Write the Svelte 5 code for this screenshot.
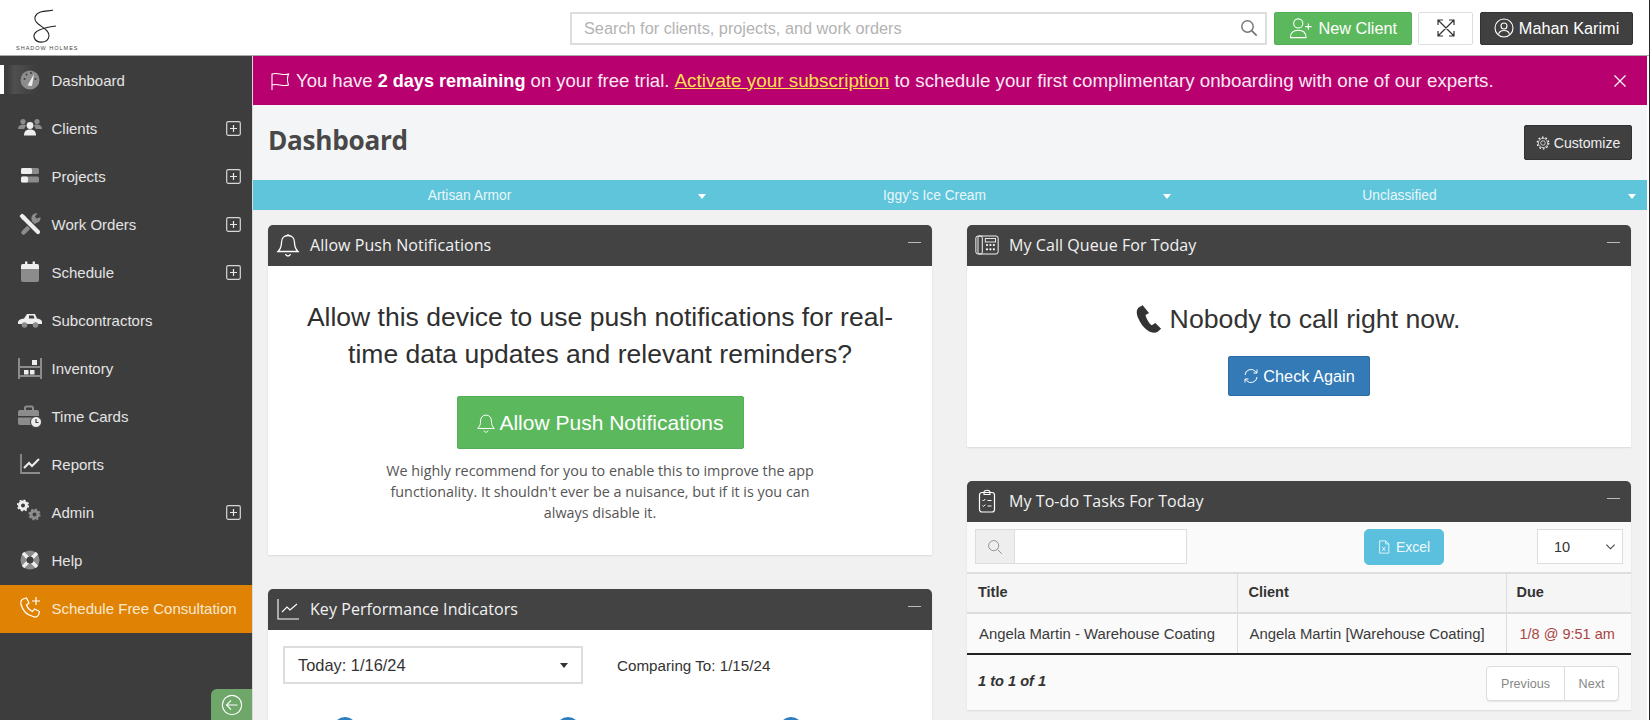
<script>
  const nav = [
    { label: 'Dashboard', icon: 'gauge', active: true },
    { label: 'Clients', icon: 'users', plus: true },
    { label: 'Projects', icon: 'projects', plus: true },
    { label: 'Work Orders', icon: 'tools', plus: true },
    { label: 'Schedule', icon: 'calendar', plus: true },
    { label: 'Subcontractors', icon: 'truck' },
    { label: 'Inventory', icon: 'inventory' },
    { label: 'Time Cards', icon: 'briefcase' },
    { label: 'Reports', icon: 'chart' },
    { label: 'Admin', icon: 'gears', plus: true },
    { label: 'Help', icon: 'help' }
  ];
</script>

{#snippet navIcon(name)}
  <svg class="nav-svg" viewBox="0 0 26 26" aria-hidden="true">
    {#if name === 'gauge'}
      <circle cx="13" cy="13" r="9.500" fill="#8c8c8c" />
      <circle cx="7.500" cy="12" r="1" fill="#3d3d3d" /><circle cx="9.500" cy="7.500" r="1" fill="#3d3d3d" /><circle cx="14" cy="6" r="1" fill="#3d3d3d" /><circle cx="18.500" cy="12" r="1" fill="#3d3d3d" />
      <path d="M10.500 18.500 L17 7 L15 19 Z" fill="#eee" />
    {:else if name === 'users'}
      <circle cx="6" cy="6.500" r="2.600" fill="#8c8c8c" /><circle cx="20" cy="6.500" r="2.600" fill="#8c8c8c" />
      <path d="M1 14c0-3 2-4.500 5-4.500s3 1 3 1l-2 3.500zM25 14c0-3-2-4.500-5-4.500s-3 1-3 1l2 3.500z" fill="#8c8c8c" />
      <circle cx="13" cy="10.500" r="3.400" fill="#eee" />
      <path d="M7 20.500c0-4.500 2.500-6 6-6s6 1.500 6 6z" fill="#eee" />
    {:else if name === 'projects'}
      <rect x="4" y="5" width="18" height="6" rx="1.500" fill="#8c8c8c" /><rect x="4" y="5" width="11" height="6" rx="1.500" fill="#eee" />
      <rect x="4" y="13.500" width="18" height="6" rx="1.500" fill="#8c8c8c" /><rect x="4" y="13.500" width="7" height="6" rx="1.500" fill="#eee" />
    {:else if name === 'tools'}
      <path d="M6.500 21.500L18 10" stroke="#8c8c8c" stroke-width="4.500" stroke-linecap="round" />
      <path d="M23.500 6a5 5 0 0 1-7 5.500L14.500 9a5 5 0 0 1 6-6.500L18 5.500l1.500 2 2-.5z" fill="#8c8c8c" />
      <path d="M6 6L21 21" stroke="#3d3d3d" stroke-width="6.500" />
      <path d="M5.500 5.500L21 21" stroke="#eee" stroke-width="4.200" stroke-linecap="round" />
      <path d="M2.500 5L5 2.500 9 6 6 9z" fill="#eee" />
    {:else if name === 'calendar'}
      <rect x="4" y="5" width="18" height="18" rx="2" fill="#8c8c8c" />
      <path d="M4 7a2 2 0 0 1 2-2h14a2 2 0 0 1 2 2v3H4z" fill="#eee" />
      <rect x="8" y="2.500" width="2.400" height="4" fill="#eee" /><rect x="15.600" y="2.500" width="2.400" height="4" fill="#eee" />
    {:else if name === 'truck'}
      <path d="M1 15c1-3 4-3 6-3.500l3-4.500h8l2 4.500c3 .5 5 1.500 5 3.500v2H1z" fill="#eee" />
      <path d="M12 8.500h4.500l1 3H12z" fill="#3d3d3d" />
      <circle cx="7.500" cy="18" r="2.800" fill="#8c8c8c" /><circle cx="18.500" cy="18" r="2.800" fill="#8c8c8c" />
    {:else if name === 'inventory'}
      <path d="M2 3v21M24 3v21" stroke="#8c8c8c" stroke-width="2" />
      <rect x="2" y="11" width="22" height="2" fill="#8c8c8c" /><rect x="2" y="20" width="22" height="2" fill="#8c8c8c" />
      <rect x="15" y="5" width="5" height="5" fill="#eee" /><rect x="7" y="15" width="4.500" height="4.500" fill="#eee" /><rect x="13" y="15" width="4.500" height="4.500" fill="#eee" />
    {:else if name === 'briefcase'}
      <path d="M8 7V5a1.500 1.500 0 0 1 1.500-1.500h5A1.500 1.500 0 0 1 16 5v2" fill="none" stroke="#8c8c8c" stroke-width="2" />
      <rect x="1" y="7" width="21" height="15" rx="2" fill="#8c8c8c" />
      <rect x="1" y="13" width="21" height="1.500" fill="#3d3d3d" />
      <circle cx="19" cy="19" r="5.500" fill="#eee" stroke="#3d3d3d" />
      <path d="M19 16v3.500h2.500" stroke="#3d3d3d" stroke-width="1.200" fill="none" />
    {:else if name === 'chart'}
      <path d="M4 3v19h19" fill="none" stroke="#8c8c8c" stroke-width="1.800" />
      <path d="M7 17l5-5 3 3 7-7" fill="none" stroke="#eee" stroke-width="2" />
    {:else if name === 'gears'}
      <circle cx="6" cy="6.500" r="3.500" fill="none" stroke="#eee" stroke-width="3" />
      <circle cx="6" cy="6.500" r="5.300" fill="none" stroke="#eee" stroke-width="1.600" stroke-dasharray="2 2.160" />
      <circle cx="17.500" cy="15.500" r="3.500" fill="none" stroke="#8c8c8c" stroke-width="3" />
      <circle cx="17.500" cy="15.500" r="5.300" fill="none" stroke="#8c8c8c" stroke-width="1.600" stroke-dasharray="2 2.160" />
    {:else if name === 'help'}
      <circle cx="13" cy="13" r="9.500" fill="#8c8c8c" />
      <path d="M6 6l5 5M20 6l-5 5M6 20l5-5M20 20l-5-5" stroke="#eee" stroke-width="3.500" />
      <circle cx="13" cy="13" r="3.500" fill="#3d3d3d" />
    {/if}
  </svg>
{/snippet}

<div class="app">
  <header class="topbar">
    <div class="logo">
      <svg class="logo-mark" viewBox="0 0 40 36" aria-hidden="true">
        <path d="M27 1C24 3 12 0 9 8C7 16 24 19 23 27C22 35 10 35 8 28C7 22 16 19 30 17" fill="none" stroke="#222" stroke-width="1.100" />
      </svg>
      <span>SHADOW HOLMES</span>
    </div>
    <div class="search">
      <span class="placeholder">Search for clients, projects, and work orders</span>
      <svg class="search-ico" viewBox="0 0 18 18"><circle cx="7.500" cy="7.500" r="5.700" fill="none" stroke="#777" stroke-width="1.500" /><path d="M11.700 11.700l5 5" stroke="#777" stroke-width="1.800" /></svg>
    </div>
    <button class="btn green">
      <svg viewBox="0 0 26 24" class="ico22"><circle cx="10" cy="7" r="5" fill="none" stroke="#fff" stroke-width="1.200" /><path d="M1.500 22.500c0-6 3-8 8.500-8s8.500 2 8.500 8z" fill="none" stroke="#fff" stroke-width="1.200" /><path d="M21 7v7M17.500 10.500h7" stroke="#fff" stroke-width="1.200" /></svg>
      New Client
    </button>
    <button class="btn expand" aria-label="Expand">
      <svg viewBox="0 0 20 20" class="ico20"><path d="M2 2l16 16M18 2L2 18M2 7V2h5M13 2h5v5M2 13v5h5M18 13v5h-5" fill="none" stroke="#333" stroke-width="1.200" /></svg>
    </button>
    <button class="btn dark user">
      <svg viewBox="0 0 20 20" class="ico20"><circle cx="10" cy="10" r="9" fill="none" stroke="#fff" stroke-width="1.100" /><circle cx="10" cy="8" r="3" fill="none" stroke="#fff" stroke-width="1.100" /><path d="M4.500 16.500c.5-3 2.500-4 5.500-4s5 1 5.500 4" fill="none" stroke="#fff" stroke-width="1.100" /></svg>
      Mahan Karimi
    </button>
  </header>

  <div class="shell">
    <aside class="sidebar">
      <nav>
        {#each nav as item}
          <div class="nav-item" class:active={item.active}>
            <span class="nav-icon">{@render navIcon(item.icon)}</span>
            <span class="nav-label">{item.label}</span>
            {#if item.plus}
              <svg class="plus" viewBox="0 0 15 15"><rect x=".7" y=".7" width="13.600" height="13.600" rx="1.500" fill="none" stroke="#d8d8d8" stroke-width="1.200" /><path d="M7.500 4v7M4 7.500h7" stroke="#e8e8e8" stroke-width="1.200" /></svg>
            {/if}
          </div>
        {/each}
        <div class="nav-item consult">
          <span class="nav-icon">
            <svg class="nav-svg" viewBox="0 0 26 26"><path d="M6 4l3.500-1 2.500 5-2.500 2c1 3 3 5 6 6.500l2-2.500 5 2.500-1 3.500c-1 2-3 2.500-5.500 1.500C10 20 5.500 15 4 9.500 3.500 7 4 5 6 4z" fill="none" stroke="#fff" stroke-width="1.200" /><path d="M19 2v8M15 6h8" stroke="#fff" stroke-width="1.200" /></svg>
          </span>
          <span class="nav-label">Schedule Free Consultation</span>
        </div>
      </nav>
      <button class="collapse" aria-label="Collapse">
        <svg viewBox="0 0 24 24" class="ico22"><circle cx="12" cy="12" r="10.500" fill="none" stroke="#fff" stroke-width="1.200" /><path d="M18 12H6.500M11 7l-5 5 5 5" fill="none" stroke="#fff" stroke-width="1.200" /></svg>
      </button>
    </aside>

    <main class="main">
      <div class="banner">
        <svg viewBox="0 0 20 20" class="flag"><path d="M2 19V3c5-2 11 2 16.500 0-1.500 4-1.500 7 0 11-5.500 2-11.500-2-16.500 0" fill="none" stroke="#fff" stroke-width="1.100" /></svg>
        <p>You have <b>2 days remaining</b> on your free trial. <a href="#top">Activate your subscription</a> <span class="rest">to schedule your first complimentary onboarding with one of our experts.</span></p>
        <svg viewBox="0 0 14 14" class="close"><path d="M1.500 1.500l11 11M12.500 1.500l-11 11" stroke="#fff" stroke-width="1.200" /></svg>
      </div>

      <div class="page-head">
        <h1>Dashboard</h1>
        <button class="btn dark customize">
          <svg viewBox="0 0 16 16" class="ico14"><circle cx="8" cy="8" r="2.600" fill="none" stroke="#fff" stroke-width=".8" /><circle cx="8" cy="8" r="5.300" fill="none" stroke="#fff" stroke-width=".8" /><circle cx="8" cy="8" r="6.600" fill="none" stroke="#fff" stroke-width="1.400" stroke-dasharray="2 2.150" /></svg>
          Customize
        </button>
      </div>

      <div class="filters">
        {#each ['Artisan Armor', "Iggy's Ice Cream", 'Unclassified'] as f}
          <div class="filter"><span>{f}</span><i class="caret"></i></div>
        {/each}
      </div>

      <div class="columns">
        <div class="col">
          <section class="panel push">
            <div class="panel-head">
              <svg viewBox="0 0 24 24" class="ph-ico"><path d="M12 2.500c-4 0-6.500 3-6.500 7 0 5-1.500 7-3.500 9h20c-2-2-3.500-4-3.500-9 0-4-2.500-7-6.500-7zM12 1v1.500M9.500 21c.5 1.500 1.300 2 2.500 2s2-.5 2.500-2" fill="none" stroke="#fff" stroke-width="1.300" /></svg>
              <h2>Allow Push Notifications</h2>
              <span class="minus"></span>
            </div>
            <div class="push-body">
              <p class="lead">Allow this device to use push notifications for real-time data updates and relevant reminders?</p>
              <button class="btn green large">
                <svg viewBox="0 0 24 24" class="ico20"><path d="M12 2.500c-4 0-6.500 3-6.500 7 0 5-1.500 7-3.500 9h20c-2-2-3.500-4-3.500-9 0-4-2.500-7-6.500-7zM9.500 21c.5 1.500 1.300 2 2.500 2s2-.5 2.500-2" fill="none" stroke="#fff" stroke-width="1.200" /></svg>
                Allow Push Notifications
              </button>
              <p class="note">We highly recommend for you to enable this to improve the app functionality. It shouldn't ever be a nuisance, but if it is you can always disable it.</p>
            </div>
          </section>

          <section class="panel">
            <div class="panel-head">
              <svg viewBox="0 0 24 24" class="ph-ico"><path d="M2 2v20h21" fill="none" stroke="#fff" stroke-width="1.100" /><path d="M6 15l5-5 3 3 7-6" fill="none" stroke="#fff" stroke-width="1.100" /></svg>
              <h2>Key Performance Indicators</h2>
              <span class="minus"></span>
            </div>
            <div class="kpi-body">
              <div class="kpi-controls">
                <div class="kpi-select"><span>Today: 1/16/24</span><i class="caret dark-caret"></i></div>
                <span class="comparing">Comparing To: 1/15/24</span>
              </div>
              <div class="kpi-dots"><i></i><i></i><i></i></div>
            </div>
          </section>
        </div>

        <div class="col">
          <section class="panel queue">
            <div class="panel-head">
              <svg viewBox="0 0 28 24" class="ph-ico wide"><rect x="1" y="1.500" width="26" height="21" rx="2.500" fill="none" stroke="#fff" stroke-width="1.100" /><rect x="3.500" y="1.500" width="5" height="21" rx="2" fill="none" stroke="#fff" stroke-width="1.100" /><rect x="12" y="4.500" width="12" height="4" fill="none" stroke="#fff" /><g fill="#fff"><circle cx="14" cy="12" r="1.300" /><circle cx="18" cy="12" r="1.300" /><circle cx="22" cy="12" r="1.300" /><circle cx="14" cy="17" r="1.300" /><circle cx="18" cy="17" r="1.300" /><circle cx="22" cy="17" r="1.300" /></g></svg>
              <h2>My Call Queue For Today</h2>
              <span class="minus"></span>
            </div>
            <div class="queue-body">
              <p class="nobody">
                <svg viewBox="0 0 24 26" class="phone"><path d="M6.500 1L3 3C1 5 1 8 2.500 12c2 5 5 9 9 11.500 3 1.800 6 2 8 .5l3-2.500-5-5-3 2c-2-1-5-6-5.500-9l3-1.800z" fill="#333" /></svg>
                Nobody to call right now.
              </p>
              <button class="btn blue">
                <svg viewBox="0 0 16 16" class="ico16"><path d="M2 7a6 6 0 0 1 10.500-3.500L14 5M14 9a6 6 0 0 1-10.500 3.500L2 11M14 1.500V5h-3.500M2 14.500V11h3.500" fill="none" stroke="#fff" stroke-width="1" /></svg>
                Check Again
              </button>
            </div>
          </section>

          <section class="panel">
            <div class="panel-head">
              <svg viewBox="0 0 24 24" class="ph-ico"><rect x="4.500" y="3.500" width="15" height="19.500" rx="2.500" fill="none" stroke="#fff" stroke-width="1.200" /><path d="M9 3.500c0-3 6-3 6 0v2H9z" fill="none" stroke="#fff" stroke-width="1.100" /><path d="M7.500 11l1 1 1.800-2M7.500 16.500l1 1 1.800-2M12.500 11.500h4M12.500 17h4" fill="none" stroke="#fff" /></svg>
              <h2>My To-do Tasks For Today</h2>
              <span class="minus"></span>
            </div>
            <div class="toolbar">
              <div class="tsearch">
                <span class="addon"><svg viewBox="0 0 18 18" class="ico16"><circle cx="7.500" cy="7.500" r="5.700" fill="none" stroke="#888" /><path d="M11.700 11.700l5 5" stroke="#888" /></svg></span>
                <span class="tinput"></span>
              </div>
              <button class="btn excel">
                <svg viewBox="0 0 14 16" class="ico14"><path d="M2 1h7l3.500 3.500V15H2zM9 1v3.500h3.500M5 8l3.500 4.500M8.500 8L5 12.500" fill="none" stroke="#fff" stroke-width=".9" /></svg>
                Excel
              </button>
              <div class="length"><span>10</span><svg viewBox="0 0 12 8" class="chev"><path d="M1.500 1.500L6 6l4.500-4.500" fill="none" stroke="#333" stroke-width="1.100" /></svg></div>
            </div>
            <table>
              <thead>
                <tr><th class="c1">Title</th><th class="c2">Client</th><th class="c3">Due</th></tr>
              </thead>
              <tbody>
                <tr><td>Angela Martin - Warehouse Coating</td><td>Angela Martin [Warehouse Coating]</td><td class="due">1/8 @ 9:51 am</td></tr>
              </tbody>
            </table>
            <div class="tfoot">
              <em>1 to 1 of 1</em>
              <div class="pager"><span class="prev">Previous</span><span class="next">Next</span></div>
            </div>
          </section>
        </div>
      </div>
    </main>
  </div>
</div>

<style>
  :global(body) { margin: 0; background: #fff; overflow: hidden; }
  .app { height: 720px; box-sizing: border-box; border-right: 1px solid #2a2a2a; display: flex; flex-direction: column; overflow: hidden; font-family: "Liberation Sans", Arial, sans-serif; color: #333; }
  p, h1, h2 { margin: 0; }
  button { font-family: inherit; }

  .topbar { height: 54px; flex: none; display: flex; align-items: center; background: #fff; border-bottom: 1px solid #aaa; padding: 1px 16px 0 0; box-sizing: content-box; }
  .logo { width: 570px; flex: none; height: 54px; box-sizing: border-box; padding: 8px 0 0 16px; display: flex; flex-direction: column; }
  .logo-mark { width: 40px; height: 36px; margin-left: 10px; flex: none; }
  .logo span { font-size: 5.500px; letter-spacing: 1px; color: #444; line-height: 6px; }
  .search { width: 698px; height: 33px; box-sizing: border-box; border: 2px solid #ddd; display: flex; align-items: center; justify-content: space-between; padding: 0 7px 0 12px; }
  .placeholder { font-size: 16.300px; color: #b3b3b3; }
  .search-ico { width: 18px; height: 18px; }
  .btn { border: 1px solid transparent; border-radius: 2px; display: inline-flex; align-items: center; justify-content: center; color: #fff; padding: 0; cursor: pointer; }
  .topbar .btn { height: 33px; font-size: 16.300px; }
  .green { background: #5cb85c; border-color: #56ae56; }
  .topbar .green { width: 138px; margin-left: 7px; gap: 5px; }
  .expand { width: 55px; margin-left: 6px; background: #fff; border-color: #ddd; }
  .dark { background: #404040; border-color: #333; }
  .user { width: 153px; margin-left: 7px; gap: 5px; }
  .ico22 { width: 24px; height: 22px; }
  .ico20 { width: 20px; height: 20px; }
  .ico16 { width: 16px; height: 16px; }
  .ico14 { width: 14px; height: 14px; }

  .shell { flex: 1; display: flex; min-height: 0; }
  .sidebar { width: 252px; flex: none; background: #3d3d3d; display: flex; flex-direction: column; justify-content: space-between; align-items: flex-end; box-shadow: 1px 0 0 #d9d9d9; position: relative; z-index: 1; }
  .sidebar nav { width: 100%; }
  .nav-item { height: 48px; display: flex; align-items: center; padding: 0 11px 0 17px; color: #e4e4e4; font-size: 15px; position: relative; }
  .nav-icon { width: 26px; height: 26px; flex: none; margin-right: 8.500px; display: flex; }
  .nav-svg { width: 26px; height: 26px; }
  .nav-label { flex: 1; }
  .plus { width: 15px; height: 15px; }
  .active::before { content: ""; position: absolute; left: 0; top: 9px; width: 4px; height: 29px; background: #fff; }
  .active::after { content: ""; position: absolute; left: 7px; top: 9px; width: 30px; height: 29px; background: linear-gradient(90deg, #3d3d3d, #4f4f4f 25%, #3d3d3d); z-index: 0; }
  .active .nav-icon { position: relative; z-index: 1; }
  .consult { background: #e08304; color: #fbe9d0; margin-top: 1px; padding-bottom: 2px; box-sizing: border-box; }
  .collapse { width: 41px; height: 31px; background: #6fa76a; border: 0; border-radius: 6px 0 0 0; display: flex; align-items: center; justify-content: center; padding: 0; }

  .main { flex: 1; min-width: 0; background: #f4f5f7; margin-right: 2px; overflow: hidden; }
  .banner { height: 49px; background: #b8006f; display: flex; align-items: center; color: #fff; padding: 0 20px 0 18px; font-size: 18.500px; }
  .banner p { flex: 1; margin-left: 6px; white-space: nowrap; color: #fbe8f2; }
  .banner b { color: #fff; font-size: 18.100px; }
  .banner a { color: #ffe14d; font-size: 18.850px; }
  .rest { font-size: 18.750px; }
  .flag { width: 20px; height: 20px; }
  .close { width: 14px; height: 14px; }

  .page-head { height: 75px; display: flex; align-items: flex-start; justify-content: space-between; padding: 17px 15px 0 16px; box-sizing: border-box; }
  h1 { font-family: "Open Sans", sans-serif; font-weight: 700; font-size: 26.200px; line-height: 37px; color: #484848; letter-spacing: -0.300px; }
  .customize { width: 108px; height: 35px; font-size: 14.100px; gap: 4px; color: #eee; margin-top: 3px; }

  .filters { height: 30px; background: #5fc5da; display: grid; grid-template-columns: repeat(3, 1fr); color: #e8f7fa; font-size: 13.800px; }
  .filter { display: flex; align-items: center; position: relative; justify-content: center; padding-right: 30px; }
  .caret { position: absolute; right: 11px; top: 14px; border: 4.500px solid transparent; border-top: 5px solid #fff; border-bottom: 0; }

  .columns { display: grid; grid-template-columns: 664px 664px; gap: 35px; padding: 15px 0 0 16px; background: #f1f1f1; min-height: 500px; }
  .col { display: flex; flex-direction: column; gap: 34px; min-width: 0; }
  .panel { background: #fff; box-shadow: 0 1px 2px rgba(0,0,0,.1); border-radius: 5px 5px 0 0; }
  .panel-head { height: 41px; background: #434343; border-radius: 5px 5px 0 0; display: flex; align-items: center; padding: 0 11px 2px 8px; box-sizing: border-box; color: #f2f2f2; position: relative; }
  .ph-ico { width: 24px; height: 24px; flex: none; }
  .panel-head h2 { font-family: "Open Sans", sans-serif; font-weight: 400; font-size: 16px; margin-left: 10px; flex: 1; letter-spacing: .07px; }
  .minus { width: 13px; height: 1.500px; background: #bbb; position: relative; top: -2px; }

  .push { height: 330px; }
  .push-body { text-align: center; padding: 33px 30px 0; display: flex; flex-direction: column; align-items: center; }
  .lead { font-size: 26.500px; line-height: 37px; width: 610px; color: #2f2f2f; }
  .large { width: 287px; height: 53px; margin-top: 23px; font-size: 21px; gap: 3px; }
  .note { font-family: "Open Sans", sans-serif; font-size: 14.350px; line-height: 21px; color: #555; width: 440px; margin-top: 11px; }

  .kpi-body { padding: 16px 15px 0; height: 200px; }
  .kpi-controls { display: flex; align-items: center; }
  .kpi-select { width: 300px; height: 38px; box-sizing: border-box; border: 2px solid #ddd; display: flex; align-items: center; padding-left: 13px; font-size: 16.400px; position: relative; }
  .dark-caret { right: 13px; top: 15px; border-top-color: #333; }
  .comparing { font-size: 15.200px; margin-left: 34px; }
  .kpi-dots { display: flex; gap: 199px; margin: 33px 0 0 50px; }
  .kpi-dots i { width: 24px; height: 24px; border-radius: 50%; background: #2f7fc0; }

  .queue { height: 222px; }
  .queue-body { display: flex; flex-direction: column; align-items: center; padding-top: 34px; }
  .nobody { font-size: 26.700px; line-height: 38px; display: flex; align-items: center; gap: 6px; color: #333; margin-right: 4px; }
  .phone { width: 30px; height: 30px; }
  .blue { width: 142px; height: 40px; margin-top: 18px; background: #337ab7; border-color: #2e6da4; font-size: 16.300px; gap: 4px; }

  .toolbar { height: 50px; display: flex; align-items: flex-start; padding: 7px 8px 0 8px; box-sizing: border-box; background: #fafafa; justify-content: space-between; }
  .tsearch { width: 212px; height: 35px; box-sizing: border-box; border: 1.500px solid #ddd; display: flex; background: #fff; }
  .addon { width: 38px; background: #eee; border-right: 1px solid #ddd; display: flex; align-items: center; justify-content: center; }
  .excel { width: 80px; height: 36px; background: #5bc0de; border-color: #5bc0de; border-radius: 5px; font-size: 14px; gap: 5px; margin-left: 83px; color: #eef9fc; }
  .length { width: 86px; height: 35px; box-sizing: border-box; border: 1.500px solid #ddd; background: #fff; display: flex; align-items: center; justify-content: space-between; padding: 0 6px 0 16px; font-size: 14.500px; }
  .chev { width: 11px; height: 8px; }

  table { width: 100%; border-collapse: collapse; table-layout: fixed; }
  th { height: 40px; background: #f5f5f5; text-align: left; font-size: 14.500px; padding: 0 0 2px 11px; border: 0 solid #ddd; border-right-width: 1px; border-top-width: 2px; border-bottom-width: 2px; box-sizing: border-box; color: #333; }
  th:last-child, td:last-child { border-right: 0; }
  .c1 { width: 270px; }
  .c2 { width: 269px; }
  td { height: 41px; font-size: 14.880px; padding: 0 0 0 12px; border-right: 1px solid #ddd; border-bottom: 2px solid #222; background: #fafafa; box-sizing: border-box; white-space: nowrap; color: #3a3a3a; }
  .due { color: #a94442; padding-left: 13px; font-size: 14.500px; }
  .c3 { padding-left: 10px; }

  .tfoot { height: 55px; display: flex; justify-content: space-between; align-items: flex-start; padding: 11px 12px 0 11px; box-sizing: border-box; background: #fafafa; }
  .tfoot em { font-size: 14.600px; font-weight: 700; color: #333; margin-top: 7px; }
  .pager { display: flex; height: 33px; border: 1px solid #ddd; border-radius: 4px; background: #fff; font-size: 12.600px; color: #888; box-shadow: 0 1px 1px rgba(0,0,0,.08); }
  .pager span { display: flex; align-items: center; justify-content: center; }
  .prev { width: 77px; border-right: 1px solid #ddd; }
  .next { width: 53px; }
</style>
